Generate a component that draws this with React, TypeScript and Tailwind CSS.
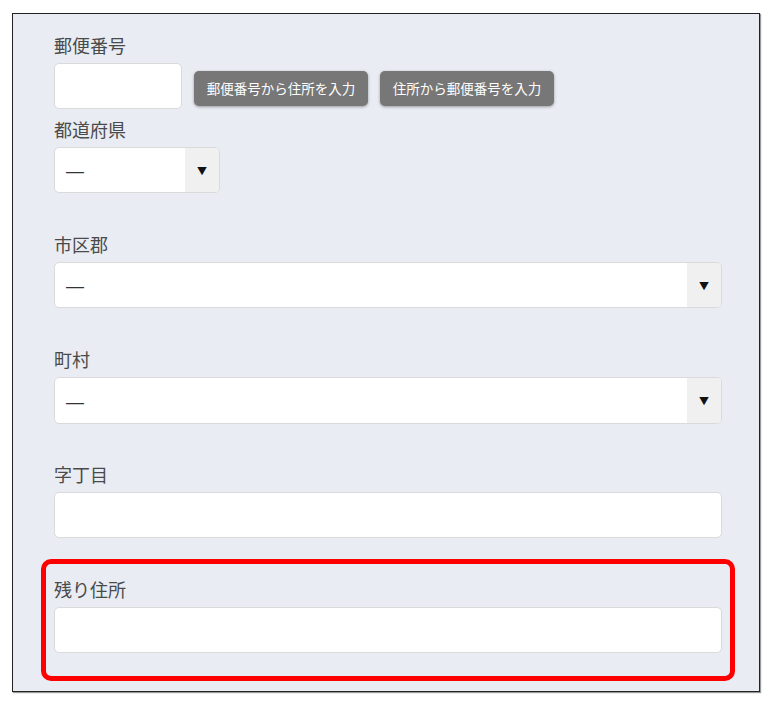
const font = { fontFamily: '"Noto Sans CJK JP", "Noto Sans", sans-serif' };

function Label({ children }: { children: string }) {
  return <div className="h-[24px] text-[18px] leading-[24px] text-[#4a4a4a]">{children}</div>;
}

function TextInput({ className = "" }: { className?: string }) {
  return (
    <div
      className={`h-[46px] rounded-[5px] border border-[#dadada] bg-white ${className}`}
    />
  );
}

function Select({ className = "" }: { className?: string }) {
  return (
    <div
      className={`flex h-[46px] overflow-hidden rounded-[5px] border border-[#dadada] bg-white ${className}`}
    >
      <div className="flex flex-1 items-center pl-[11px] pt-[3px] font-['Liberation_Sans',sans-serif] text-[18px] text-[#333]">
        —
      </div>
      <div className="flex w-[34px] items-center justify-center bg-[#f0f0f0] text-[10px] text-[#111]">
        ▼
      </div>
    </div>
  );
}

function GrayButton({ children }: { children: string }) {
  return (
    <button
      type="button"
      className="mt-[8px] flex h-[35px] w-[174px] items-center justify-center rounded-[5px] bg-[#777777] text-[13.5px] text-white shadow-[0_1px_3px_rgba(0,0,0,0.35)]"
    >
      {children}
    </button>
  );
}

export default function App() {
  return (
    <div className="min-h-[704px] bg-white pl-[12px] pt-[13px]" style={font}>
      <div className="box-border h-[679px] w-[748px] border border-[#222] bg-[#e9ecf3] pl-[41px] pt-[19px] shadow-[1px_1px_1px_#999]">
        <Label>郵便番号</Label>
        <div className="mt-[6px] flex items-start gap-[12px]">
          <TextInput className="w-[128px]" />
          <GrayButton>郵便番号から住所を入力</GrayButton>
          <GrayButton>住所から郵便番号を入力</GrayButton>
        </div>

        <div className="mt-[8px]">
          <Label>都道府県</Label>
          <Select className="mt-[6px] w-[166px]" />
        </div>

        <div className="mt-[39px] w-[668px]">
          <Label>市区郡</Label>
          <Select className="mt-[6px]" />
        </div>

        <div className="mt-[39px] w-[668px]">
          <Label>町村</Label>
          <Select className="mt-[6px] h-[47px]" />
        </div>

        <div className="mt-[38px] w-[668px]">
          <Label>字丁目</Label>
          <TextInput className="mt-[6px]" />
        </div>

        <div className="-ml-[13px] mt-[21px] w-[694px] rounded-[10px] border-[5px] border-[#ff0000] px-[8px] pb-[23px] pt-[13px]">
          <Label>残り住所</Label>
          <TextInput className="mt-[6px]" />
        </div>
      </div>
    </div>
  );
}
